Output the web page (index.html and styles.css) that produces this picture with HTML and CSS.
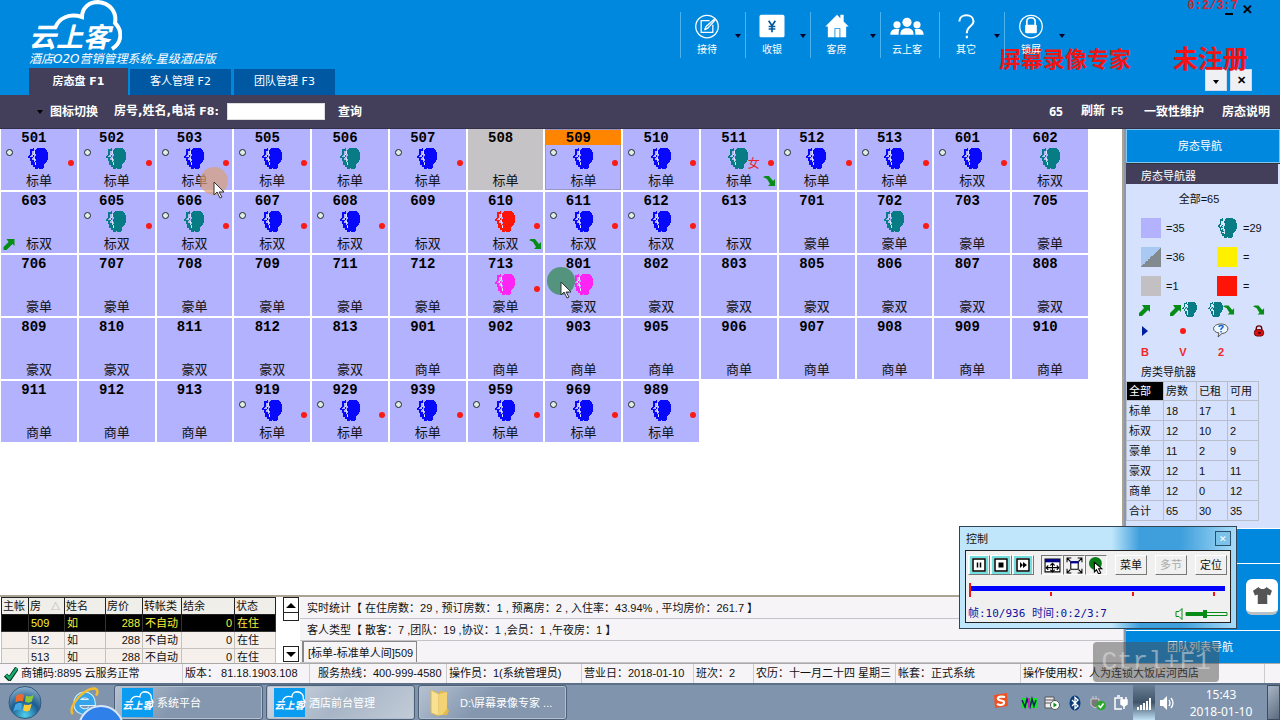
FILE: index.html
```html
<!DOCTYPE html>
<html lang="zh-CN">
<head>
<meta charset="utf-8">
<title>云上客 酒店管理系统</title>
<link rel="stylesheet" href="styles.css">
</head>
<body>
<svg class="defs" aria-hidden="true">
  <symbol id="head" viewBox="0 0 20 21">
    <g shape-rendering="crispEdges">
      <path fill="currentColor" d="M8 1l2-1h6l3 2 1 3v6l-1 3-2 1-1 2v2l-1 2h-4v-2l-1 2H7v-3l1-2-1-2 1-2-1-1V9l1-2-1-3z"/>
      <path fill="none" stroke="currentColor" stroke-width="1.500" d="M6 1L3 2v4L1 9l2 1v2l1 1v3h2v3"/>
      <path fill="currentColor" d="M4 7h2v3H4zM5 12h2v3H5zM4 2h2v1H4z"/>
      <path fill="none" stroke="#e8f4ff" stroke-width=".8" d="M6 3v3L4 8l2 2v2l1 2v3"/>
    </g>
  </symbol>
  <symbol id="up" viewBox="0 0 12 12"><path fill="#078c18" d="M3 1h8v7L9 6l-6 6H0V9l5-5z"/></symbol>
  <symbol id="down" viewBox="0 0 13 12"><path fill="#078c18" d="M0 2l2-1h4l4 5 2-2v7H5l2-2-3-5z"/></symbol>
  <symbol id="cursor" viewBox="0 0 12 18"><path fill="#fff" stroke="#333" d="M1 1v13l3-3 3 6 2-1-3-5h5z"/></symbol>
  <symbol id="logo" viewBox="0 0 90 52"><path fill="none" stroke="#fff" stroke-width="4" d="M25 28C29 18 39 13 52 17 52 7 60 2 68 2 80 3 87 12 85 23c8 8 7 20-3 26"/></symbol>
</svg>

<header class="header">
  <div class="header-top">
    <div class="brand">
      <svg class="brand-cloud"><use href="#logo"/></svg>
      <strong class="brand-name">云上客</strong>
      <span class="brand-sub">酒店O2O营销管理系统-星级酒店版</span>
    </div>
    <nav class="menu">
      <button class="menu-item has-more"><svg viewBox="0 0 30 30" fill="none" stroke="#fff" stroke-width="1.500"><circle cx="15" cy="15" r="13.500"/><path d="M18 8H8v14h14V13M12 19l2-4L24 6M12 19l4-2 9-10"/></svg><span>接待</span></button>
      <button class="menu-item has-more"><svg viewBox="0 0 30 30"><rect x="0" y="1" width="30" height="27" rx="2" fill="#fff"/><path fill="none" stroke="#00599e" stroke-width="2" d="M11 8l4 6 4-6M15 14v8M11 15h8M11 18h8"/></svg><span>收银</span></button>
      <button class="menu-item has-more wide"><svg viewBox="0 0 30 30" fill="#fff"><path d="M1 15L15 1l4 4V1h4v8l6 6h-3v13h-7V17h-7v11H4V15z"/><path d="M13 18h5v10h-5z"/></svg><span>客房</span></button>
      <button class="menu-item narrow"><svg class="people" viewBox="0 0 40 30" fill="#fff"><circle cx="20" cy="10" r="5.500"/><circle cx="8" cy="13" r="4.300"/><circle cx="32" cy="13" r="4.300"/><path d="M12 25c0-6 3-8 8-8s8 2 8 8zM0 25c0-5 3-7 7-7h4c-1 2-1 4-1 7zM30 25c0-3 0-5-1-7h4c4 0 7 2 7 7z"/></svg><span>云上客</span></button>
      <button class="menu-item has-more"><svg viewBox="0 0 30 30" fill="none" stroke="#fff" stroke-width="2.500"><path d="M7 9c0-10 17-10 17 0 0 6-8 5-8 14M16 26v3"/></svg><span>其它</span></button>
      <button class="menu-item has-more"><svg viewBox="0 0 30 30"><circle cx="15" cy="15" r="13.500" fill="none" stroke="#fff" stroke-width="1.500"/><path d="M10 14V9c0-6 10-6 10 0v5" fill="none" stroke="#fff" stroke-width="2"/><rect x="8" y="13" width="14" height="10" rx="1" fill="#fff"/></svg><span>锁屏</span></button>
    </nav>
    <div class="window-controls"><button aria-label="最小化"><i class="dash"></i></button><button aria-label="关闭">✕</button></div>
  </div>
  <div class="header-tabs">
    <button class="tab active">房态盘 F1</button>
    <button class="tab">客人管理 F2</button>
    <button class="tab">团队管理 F3</button>
    <div class="pane-controls"><button aria-label="列表"><i class="caret"></i></button><button aria-label="关闭页签">✕</button></div>
  </div>
  <div class="watermark"><span>屏幕录像专家</span><span>未注册</span></div>
  <div class="rec-time">0:2/3:7</div>
</header>

<div class="toolbar">
  <button class="switch"><i class="caret"></i>图标切换</button>
  <label for="q">房号,姓名,电话 <small>F8:</small></label>
  <input id="q" type="text">
  <button>查询</button>
  <span class="count">65</span>
  <button class="refresh">刷新 <small>F5</small></button>
  <button class="maintain">一致性维护</button>
  <button>房态说明</button>
</div>

<main class="main">
  <section class="work">
    <div class="board-wrap">
      <div class="board" id="board"></div>
      <div class="pointer orange"><svg><use href="#cursor"/></svg></div>
      <div class="pointer green"><svg><use href="#cursor"/></svg></div>
    </div>
    <div class="bottom">
      <div class="guest-list">
        <table class="guests">
          <colgroup><col class="c1"><col class="c2"><col class="c3"><col class="c4"><col class="c5"><col class="c6"><col class="c7"></colgroup>
          <thead><tr><th>主帐</th><th>房 <span class="sort">△</span></th><th>姓名</th><th>房价</th><th>转帐类</th><th>结余</th><th>状态</th></tr></thead>
          <tbody>
            <tr class="selected"><td></td><td>509</td><td>如</td><td class="num">288</td><td>不自动</td><td class="num">0</td><td>在住</td></tr>
            <tr><td></td><td>512</td><td>如</td><td class="num">288</td><td>不自动</td><td class="num">0</td><td>在住</td></tr>
            <tr><td></td><td>513</td><td>如</td><td class="num">288</td><td>不自动</td><td class="num">0</td><td>在住</td></tr>
          </tbody>
        </table>
      </div>
      <div class="scroll"><button aria-label="向上"><i class="caret up"></i></button><span class="thumb"></span><button class="last" aria-label="向下"><i class="caret"></i></button></div>
      <div class="stats">
        <p>实时统计【 在住房数：29 , 预订房数：1 , 预离房：2 , 入住率：43.94% , 平均房价：261.7 】</p>
        <p>客人类型【 散客：7 ,团队：19 ,协议：1 ,会员：1 ,午夜房：1 】</p>
        <p class="room-line"><span>[标单-标准单人间]509</span></p>
      </div>
    </div>
  </section>

  <aside class="side">
    <button class="side-title">房态导航</button>
    <div class="side-panel">
      <h2>房态导航器</h2>
      <p class="all">全部=65</p>
      <div class="legend">
        <i class="sw free"></i><span>=35</span><svg class="teal"><use href="#head"/></svg><span>=29</span>
        <i class="sw half"></i><span>=36</span><i class="sw yellow"></i><span>=</span>
        <i class="sw gray"></i><span>=1</span><i class="sw red"></i><span>=</span>
      </div>
      <div class="marks">
        <span><svg class="m"><use href="#up"/></svg></span>
        <span><svg class="m"><use href="#up"/></svg><svg class="h"><use href="#head"/></svg></span>
        <span><svg class="h"><use href="#head"/></svg><svg class="m"><use href="#down"/></svg></span>
        <span><svg class="m"><use href="#down"/></svg></span>
        <span><svg class="m" viewBox="0 0 12 12"><path fill="#001f9e" d="M3 1l6 5-6 5z"/></svg></span>
        <span><i class="dot"></i></span>
        <span><svg class="bubble" viewBox="0 0 16 15"><path fill="#eef6ff" stroke="#555" d="M8 1c9 0 9 9 1 9.500L5 14l1-4C-2 9-1 1 8 1z"/><path fill="none" stroke="#1769d2" stroke-width="1.500" d="M6 4c0-2 5-2 4 0l-2 2v1M8 8v1.500"/></svg></span>
        <span><svg class="m" viewBox="0 0 12 13"><path fill="none" stroke="#600" stroke-width="1.500" d="M3 6V4c0-4 6-4 6 0v2"/><rect x="1" y="5" width="10" height="7" rx="3" fill="#d11" stroke="#600"/><path stroke="#400" stroke-width="2" d="M5 8.500h3"/></svg></span>
        <b>B</b><b>V</b><b>2</b>
      </div>
      <h3>房类导航器</h3>
      <table class="types">
        <colgroup><col class="t1"><col class="t2"><col class="t3"><col class="t4"></colgroup>
        <tr><th class="on">全部</th><th>房数</th><th>已租</th><th>可用</th></tr>
        <tr><td>标单</td><td>18</td><td>17</td><td>1</td></tr>
        <tr><td>标双</td><td>12</td><td>10</td><td>2</td></tr>
        <tr><td>豪单</td><td>11</td><td>2</td><td>9</td></tr>
        <tr><td>豪双</td><td>12</td><td>1</td><td>11</td></tr>
        <tr><td>商单</td><td>12</td><td>0</td><td>12</td></tr>
        <tr><td>合计</td><td>65</td><td>30</td><td>35</td></tr>
      </table>
    </div>
    <div class="side-strip"></div>
    <div class="side-skin"><button aria-label="皮肤"><svg viewBox="0 0 22 20"><path fill="#555" d="M7 1c1 3 7 3 8 0l6 4-2 5-3-1v10H6V9l-3 1-2-5z"/></svg></button></div>
    <button class="side-team">团队列表导航</button>
  </aside>

  <section class="recorder">
    <div class="rec-title"><span>控制</span><button aria-label="关闭">✕</button></div>
    <div class="rec-body">
      <div class="rec-tools">
        <button class="key" aria-label="暂停"><svg viewBox="0 0 14 14"><rect x="1" y="1" width="12" height="12" fill="#fff" stroke="#000" stroke-width="1.500"/><path stroke="#000" stroke-width="1.500" d="M5.500 4.500v5M8.500 4.500v5"/></svg></button>
        <button class="key" aria-label="停止"><svg viewBox="0 0 14 14"><rect x="1" y="1" width="12" height="12" fill="#fff" stroke="#000" stroke-width="1.500"/><path d="M4.500 4.500h5v5h-5z"/></svg></button>
        <button class="key" aria-label="快进"><svg viewBox="0 0 14 14"><rect x="1" y="1" width="12" height="12" fill="#fff" stroke="#000" stroke-width="1.500"/><path d="M4 4l3 3-3 3zM7 4l4 3-4 3z"/></svg></button>
        <button class="tog first" aria-label="移动"><svg viewBox="0 0 16 16"><path fill="#fff" stroke="#000" d="M1 2h14v12H1z"/><path fill="#008" d="M1 2h14v3H1z"/><path fill="none" stroke="#000" d="M2 10h12M8 6v7M4 8l-2 2 2 2M12 8l2 2-2 2M6 8l2-2 2 2M6 12l2 2 2-2"/></svg></button>
        <button class="tog" aria-label="全屏"><svg viewBox="0 0 16 16"><path fill="#fff" stroke="#000" d="M4.500 4.500h7v7h-7z"/><path stroke="#009" stroke-width="2" d="M4 5h8"/><path fill="none" stroke="#000" d="M1 5V1h4M11 1h4v4M15 11v4h-4M5 15H1v-4M1 1l3 3M15 1l-3 3M1 15l3-3M15 15l-3-3"/></svg></button>
        <button class="tog" aria-label="光标"><svg viewBox="0 0 16 16"><circle cx="7" cy="6" r="6" fill="#087a16"/><path fill="#fff" stroke="#000" d="M6 5v9l2-2 2 4 2-1-2-4h3z"/></svg></button>
        <button class="txt">菜单</button><button class="txt" disabled>多节</button><button class="txt">定位</button>
      </div>
      <div class="rec-track"><i></i><i></i><i></i><i></i></div>
      <div class="rec-info"><span>帧:10/936 时间:0:2/3:7</span><svg viewBox="0 0 54 14"><path fill="none" stroke="#078c18" d="M2 4.500h3l3-3v11l-3-3H2zM12 5.500h41v3H12z"/><path fill="#078c18" d="M12 5h20v4H12zM29 3h4v8h-4z"/></svg></div>
    </div>
  </section>
</main>

<footer class="status">
  <span class="ok"><svg viewBox="0 0 14 14"><path fill="none" stroke="#003c20" stroke-width="4.500" d="M1.500 8l4 4L13 1"/><path fill="none" stroke="#1bab70" stroke-width="2.500" d="M2 8l3.500 3.500L13 1"/></svg>商铺码:8895 云服务正常</span>
  <span>版本： 81.18.1903.108</span>
  <span class="hot">服务热线：400-999-4580</span>
  <span>操作员：1(系统管理员)</span>
  <span>营业日：2018-01-10</span>
  <span>班次：2</span>
  <span>农历：十一月二十四 星期三</span>
  <span>帐套：正式系统</span>
  <span>操作使用权：人为连锁大饭店河西店</span>
  <span></span>
  <div class="keycast">Ctrl+F1</div>
</footer>

<div class="taskbar">
  <button class="start" aria-label="开始"><svg viewBox="0 0 36 36"><defs><radialGradient id="orb" cx=".5" cy=".9" r=".9"><stop offset="0" stop-color="#4fd0ee"/><stop offset=".5" stop-color="#1c5c90"/><stop offset="1" stop-color="#8cb0cc"/></radialGradient></defs><circle cx="18" cy="18" r="16.500" fill="url(#orb)" stroke="#35577a"/><path fill="#ed6a2c" d="M9 11c3-2 5-2 8-1l-1 7c-3-1-5-1-8 1z"/><path fill="#8cc63a" d="M19 11c3 1 5 1 8-1l-2 7c-3 2-5 1-7 0z"/><path fill="#43a6e0" d="M8 20c3-2 5-2 7-1l-1 7c-3-1-5-1-8 1z"/><path fill="#fccb38" d="M17 20c3 1 5 1 8-1l-2 7c-3 2-5 1-7 0z"/></svg></button>
  <div class="ie"><svg viewBox="0 0 32 32"><path fill="none" stroke="#d8f2ff" stroke-width="7" d="M8 16h16C23 5 8 6 8 17c0 9 11 11 15 5"/><path fill="none" stroke="#36a4ea" stroke-width="5" d="M8 16h16C23 5 8 6 8 17c0 9 11 11 15 5"/><path fill="none" stroke="#f2bc2b" stroke-width="2.500" d="M4 28C-1 22 10 8 20 3c9-4 11 1 8 6"/></svg></div>
  <i class="bubble-ball"></i>
  <button class="task"><span class="task-logo"><svg><use href="#logo"/></svg><b>云上客</b></span>系统平台</button>
  <button class="task lit"><span class="task-logo"><svg><use href="#logo"/></svg><b>云上客</b></span>酒店前台管理</button>
  <button class="task"><svg class="folder" viewBox="0 0 30 30"><path fill="#e2b94e" d="M14 3l7 1v16l2 3-2 4h-7z"/><path fill="#f8e190" stroke="#d8b558" d="M5 2l8 4v22l-8-3z"/><path fill="#f3d373" d="M13 6l8-2v17l-5 6h-3z"/></svg>D:\屏幕录像专家 ...</button>
  <div class="tray">
    <svg class="ime" viewBox="0 0 16 16"><path fill="#ef5323" d="M1 2l13-2 1 13-13 2z"/><path fill="none" stroke="#fff" stroke-width="2.200" d="M12 4C8 3 4 4 5 6s7 1 6 4-5 2-7 1"/></svg>
    <svg viewBox="0 0 16 16"><path fill="#19e02b" d="M0 3h16v10H0z"/><path fill="none" stroke="#125" stroke-width="1.500" d="M1 5l3 7 2-8 3 8 2-8 2 7 2-6"/><path stroke="#c2c" stroke-width="2" d="M8 3v10"/></svg>
    <svg viewBox="0 0 16 16"><path fill="#eee" stroke="#555" d="M1 2h9v11H1zM1 5h9M1 8h9"/><circle cx="11" cy="10" r="4.500" fill="#fff" stroke="#555"/><path fill="#078c18" d="M9.500 7.500L13 10l-3.500 2.500z"/></svg>
    <svg viewBox="0 0 16 16"><ellipse cx="8" cy="8" rx="5.500" ry="7.500" fill="#083d7c"/><path fill="none" stroke="#fff" stroke-width="1.300" d="M5 5l6 6-3 2.500v-11L11 5l-6 6"/></svg>
    <svg viewBox="0 0 16 16"><path fill="#777" stroke="#ccc" d="M1 4h8v6l-4 3-4-3zM3 1v3M6 1v3"/><circle cx="11" cy="10.500" r="4.800" fill="#2aa82e"/><path fill="none" stroke="#fff" stroke-width="1.600" d="M8.500 10.500l2 2 3-4"/></svg>
    <svg viewBox="0 0 16 16" fill="none" stroke="#fff" stroke-width="1.500"><path d="M9 3H2v11h7M4 1h3"/><path fill="#fff" d="M8 5h6v4l-3 2-3-2z"/><path d="M9 2v3M13 2v3M11 10v4"/></svg>
    <span class="net"><svg viewBox="0 0 16 16" fill="#fff"><path d="M1 11h2v3H1zM4 9h2v5H4zM7 7h2v7H7zM10 5h2v9h-2zM13 2h2v12h-2z"/></svg></span>
    <svg viewBox="0 0 16 16"><path fill="#fff" d="M1 5h3l4-4v14l-4-4H1z"/><path fill="none" stroke="#fff" stroke-width="1.300" d="M10 5q2 3 0 6M12 3q4 5 0 10"/></svg>
  </div>
  <div class="clock">15:43<br>2018-01-10</div>
  <button class="peek" aria-label="显示桌面"></button>
</div>
<script src="rooms.js"></script>
</body>
</html>
```
FILE: styles.css
```css
* { box-sizing: border-box; }
body {
  margin: 0;
  min-height: 100vh;
  display: flex;
  flex-direction: column;
  font: 11px/16px "Liberation Sans", "Noto Sans CJK SC", sans-serif;
  color: #111;
  background: #fff;
}
button { font: inherit; color: inherit; background: none; border: 0; padding: 0; }
p, h2, h3 { margin: 0; font: inherit; }
svg { display: block; }
.defs { position: absolute; width: 0; height: 0; }
.caret { display: inline-block; border: 3px solid transparent; border-top: 4px solid #000; border-bottom: 0; }
.caret.up { border-top: 0; border-bottom: 4px solid #000; }

/* header */
.header { position: relative; background: #0087de; color: #fff; }
.header-top { display: flex; height: 68px; }
.brand { position: relative; padding: 24px 0 0 29px; width: 260px; }
.brand-cloud { position: absolute; left: 28px; top: 0; width: 94px; height: 52px; }
.brand-name { display: block; font-size: 27px; line-height: 28px; font-style: italic; font-weight: 700; }
.brand-sub { display: block; font-size: 12px; line-height: 15px; font-style: italic; font-family: "DejaVu Sans", "Noto Sans CJK SC", sans-serif; white-space: nowrap; }
.menu { position: relative; z-index: 1; display: flex; margin-left: auto; padding-top: 12px; }
.menu-item {
  position: relative;
  width: 65px;
  height: 46px;
  padding: 2px 12px 0 0;
  border-left: 1px solid #4bb4f0;
  display: flex;
  flex-direction: column;
  align-items: center;
  gap: 3px;
  font-size: 10px;
}
.menu-item.wide { width: 70px; padding-right: 18px; }
.menu-item.narrow { width: 59px; padding-right: 6px; }
.menu-item svg { width: 30px; height: 30px; }
.menu-item .people { width: 40px; }
.menu-item.has-more::after { content: ""; position: absolute; right: 4px; top: 22px; border: 3px solid transparent; border-top: 4px solid #002; border-bottom: 0; }
.window-controls { width: 211px; padding: 2px 27px 0 0; display: flex; justify-content: flex-end; align-items: flex-start; gap: 9px; color: #000; font-size: 13px; font-weight: 700; }
.dash { display: block; width: 8px; height: 2px; margin-top: 11px; background: #000; }
.header-tabs { display: flex; align-items: flex-end; padding-left: 29px; height: 27px; gap: 3px; }
.tab { width: 101px; height: 26px; background: #0058a2; font-family: "DejaVu Sans", "Noto Sans CJK SC", sans-serif; }
.tab.active { width: 99px; height: 27px; margin-right: -1px; background: #433f5a; font-size: 11px; font-weight: 700; }
.pane-controls { margin: 0 28px 4px auto; display: flex; gap: 3px; color: #000; }
.pane-controls button { width: 22px; height: 22px; background: #eef0f4; border: 1px solid #cfdbe8; font-weight: 700; }
.watermark { position: absolute; right: 32px; top: 46px; display: flex; gap: 42px; color: #f01414; font: 700 22px/28px "Liberation Serif", "Noto Sans CJK SC", serif; white-space: nowrap; }
.watermark span + span { font-size: 25px; }
.rec-time { position: absolute; right: 42px; top: 0; color: #d92430; font: 700 12px/13px "Liberation Mono", monospace; }

/* toolbar */
.toolbar {
  display: flex;
  align-items: center;
  height: 34px;
  padding: 0 10px 0 37px;
  background: #433f5a;
  color: #fff;
  font-size: 12px;
  font-weight: 700;
  border-bottom: 1px solid #34304a;
  white-space: nowrap;
}
.toolbar label { margin: 0 8px 0 16px; font-family: "DejaVu Sans", "Noto Sans CJK SC", sans-serif; font-size: 12px; }
.toolbar label small { font-size: 11px; }
.toolbar input { width: 98px; height: 17px; margin-right: 13px; padding: 0 2px; border: 1px solid #ddd; outline: 0; color: #111; background: #fff; font: inherit; }
.switch { display: flex; align-items: center; gap: 7px; }
.count { margin-left: auto; font-family: "Noto Sans", sans-serif; }
.refresh { margin-left: 18px; }
.refresh small { font-size: 10px; margin-left: 3px; }
.maintain { margin: 0 18px 0 21px; }

/* board */
.main { position: relative; flex: 1; display: grid; grid-template-columns: minmax(0, 1fr) 156px; }
.work { display: flex; flex-direction: column; min-width: 0; }
.board-wrap { position: relative; flex: 1; border-right: 2px solid #aaa394; }
.board { display: grid; grid-template-columns: repeat(14, minmax(0, 1fr)); gap: 2px; padding: 0 34px 0 1px; }
.room { position: relative; height: 61px; background: #b2b2ff; text-align: center; padding: 1px 0 0; display: flex; flex-direction: column; align-items: center; }
.room.dirty { background: #c6c3c6; }
.room.picked { box-shadow: inset 0 0 0 1px #9a98c0; }
.room-no { width: 100%; padding-right: 10px; font: 700 14px/16px "Liberation Mono", monospace; color: #000; }
.picked .room-no { height: 15px; margin-bottom: 1px; background: #ff8500; }
.room-head { height: 27px; padding: 2px 1px 0 0; }
.room-head svg { width: 20px; height: 21px; }
.room-type { font-size: 13px; line-height: 16px; }
.blue { color: #0808fa; }
.teal { color: #087c84; }
.crimson { color: #ff1408; }
.pink { color: #ff24f4; }
.room .ring { position: absolute; left: 5px; top: 20px; width: 7px; height: 7px; border: 1px solid #222; border-radius: 50%; background: #dceee6; }
.dot { display: block; width: 6px; height: 6px; border-radius: 3px; background: #fa1c14; }
.room .dot { position: absolute; right: 3px; top: 31px; }
.room .woman { position: absolute; right: 17px; top: 27px; color: #e8202c; font-size: 12px; }
.room .arr { position: absolute; bottom: 3px; width: 13px; height: 12px; }
.arr.out { right: 1px; }
.arr.in { left: 2px; }
.pointer { position: absolute; width: 28px; height: 28px; border-radius: 50%; }
.pointer svg { position: absolute; left: 13px; top: 14px; width: 12px; height: 18px; }
.pointer.orange { left: 200px; top: 38px; background: rgba(220, 160, 120, .7); }
.pointer.green { left: 547px; top: 138px; background: #54947e; }

/* bottom lists */
.bottom { display: flex; height: 68px; border-top: 2px solid #aaa394; background: #f6f4f7; border-right: 1px solid #ccc; }
.guest-list { width: 276px; height: 66px; overflow: hidden; padding-left: 1px; background: #fff; }
.guests { width: 274px; table-layout: fixed; border-collapse: collapse; line-height: 16px; white-space: nowrap; }
.guests th { height: 17px; padding: 0 1px; text-align: left; font-weight: 400; border: 1px solid #222; background: #f0eee9; }
.guests td { height: 17px; padding: 0 2px; border: 1px solid #c5c1bc; background: #f5f0eb; }
.guests .num { text-align: right; }
.guests .selected td { background: #000; color: #f5f03a; border-color: #333; }
.sort { color: #999; font-size: 9px; line-height: 9px; margin-left: 7px; }
.c1 { width: 27px; } .c2 { width: 36px; } .c3 { width: 41px; } .c4 { width: 37px; } .c5 { width: 39px; } .c6 { width: 53px; } .c7 { width: 41px; }
.scroll { width: 24px; padding: 0 1px 0 7px; display: flex; flex-direction: column; background: #fff; }
.scroll button { height: 16px; border: 1px solid #222; background: #fff; display: grid; place-items: center; }
.scroll .caret { border-left-width: 5px; border-right-width: 5px; border-top-width: 5px; }
.scroll .caret.up { border-top-width: 0; border-bottom-width: 5px; }
.scroll .thumb { height: 8px; border: 1px solid #222; border-top: 0; }
.scroll .last { margin-top: auto; margin-bottom: 1px; }
.stats { flex: 1; white-space: nowrap; overflow: hidden; }
.stats p { height: 22px; line-height: 22px; padding-left: 7px; border-bottom: 1px solid #c6c3c8; }
.stats .room-line { padding-left: 2px; }
.room-line span { display: inline-block; height: 21px; width: 115px; padding-left: 4px; border: 1px solid #888; border-width: 1px 1px 0 2px; }

/* sidebar */
.side { display: flex; flex-direction: column; border-left: 2px solid #8c98aa; background: #fff; }
.side-title { height: 34px; padding-right: 6px; background: #0087de; color: #fff; border: 1px solid #80c6f4; }
.side-panel { flex: 1; background: #d5e1fd; border-top: 1px solid #333; padding-bottom: 4px; }
.side-panel h2 { height: 20px; line-height: 24px; padding-left: 15px; margin-right: 2px; background: #433f5a; color: #fff; }
.all { text-align: center; margin: 7px 8px 11px 0; }
.legend { display: grid; grid-template-columns: 25px 51px 26px 1fr; row-gap: 9px; align-items: center; padding-left: 15px; }
.sw { width: 20px; height: 20px; }
.legend svg { width: 20px; height: 20px; }
.free { background: #b2b2ff; }
.half { background: linear-gradient(135deg, #a9c9f2 50%, #82898f 50%); }
.gray { background: #c2c0c2; }
.yellow { background: #fff000; }
.red { background: #ff1408; }
.marks { display: grid; grid-template-columns: repeat(4, 38px); grid-auto-rows: 21px; margin-top: 3px; color: #087c84; }
.marks > * { display: flex; align-items: center; justify-content: center; }
.marks .m { width: 12px; height: 12px; }
.marks .h { width: 15px; height: 15px; }
.marks .bubble { width: 16px; height: 15px; }
.marks b { color: #f02828; }
.side-panel h3 { padding: 2px 0 0 15px; line-height: 17px; }
.types { width: 132px; table-layout: fixed; border-collapse: collapse; }
.types th, .types td { height: 20px; padding: 0 2px; border: 1px solid #b9bfca; font-weight: 400; text-align: left; line-height: 18px; }
.types th { height: 19px; }
.types .on { background: #000; color: #fff; }
.t1 { width: 37px; } .t2 { width: 33px; } .t3 { width: 31px; } .t4 { width: 31px; }
.side-strip { height: 34px; margin-top: 1px; background: #0087de; }
.side-skin { height: 66px; margin-top: 1px; padding-right: 2px; background: #0087de; display: flex; justify-content: flex-end; align-items: center; }
.side-skin button { width: 32px; height: 36px; border-radius: 6px; background: #fff; border-bottom: 3px solid #b9c0c6; display: grid; place-items: center; }
.side-skin svg { width: 21px; height: 19px; }
.side-team { height: 32px; margin-top: 1px; padding-right: 6px; background: #0087de; color: #fff; }

/* floating recorder window */
.recorder { position: absolute; right: 43px; bottom: 34px; width: 278px; padding: 0 5px 5px; border: 1px solid #345; background: linear-gradient(90deg, #bfe6fb 0 55%, #3f9fdc 65%, #3f9fdc 80%, #a8dcf8); }
.rec-title { display: flex; justify-content: space-between; align-items: center; height: 23px; padding-left: 1px; }
.rec-title button { width: 16px; height: 15px; border: 1px solid #26506e; background: #7cc3ea; color: #fff; font-size: 9px; line-height: 10px; }
.rec-body { height: 73px; border: 1px solid #222; background: #f0f0f0; padding: 3px 2px; }
.rec-tools { display: flex; align-items: center; height: 22px; }
.rec-tools button { height: 20px; border: 1px solid; border-color: #fff #777 #777 #fff; display: grid; place-items: center; }
.key { width: 22px; }
.key svg { width: 14px; height: 14px; outline: 2px solid #72dfdf; }
.tog { width: 22px; }
.rec-tools .tog { border-color: #777 #fff #fff #777; }
.tog svg { width: 17px; height: 17px; }
.tog.first { margin-left: 7px; }
.rec-tools .txt { width: 32px; margin-left: 8px; }
.txt:disabled { color: #aaa; }
.rec-track { display: flex; justify-content: space-between; height: 10px; margin: 10px 3px 0 1px; border-top: 5px solid #00f; padding-right: 10px; }
.rec-track i { width: 2px; height: 4px; margin-top: 1px; background: #f01818; }
.rec-track i:first-child { height: 14px; margin-top: -8px; }
.rec-info { display: flex; justify-content: space-between; align-items: center; margin-top: 10px; color: #1010a0; }
.rec-info span { font: 11px/16px "DejaVu Sans Mono", "Noto Sans CJK SC", monospace; }
.rec-info svg { width: 54px; height: 14px; }

/* status line */
.status { position: relative; display: grid; grid-template-columns: 182fr 127fr 137fr 135fr 112fr 60fr 142fr 125fr 244fr 16fr; height: 20px; background: #f6f4f7; border-top: 1px solid #aaa; white-space: nowrap; }
.status > span { padding-left: 2px; line-height: 19px; border-left: 1px solid #ccc; }
.status .ok { display: flex; align-items: center; gap: 3px; border: 0; padding-left: 4px; }
.status .hot { padding-left: 8px; }
.ok svg { width: 14px; height: 14px; }
.keycast { position: absolute; right: 61px; top: -22px; width: 126px; height: 40px; border-radius: 4px; background: rgba(80, 80, 80, .5); color: rgba(230, 230, 230, .5); text-align: center; font: 26px/40px "Liberation Mono", monospace; }

/* taskbar */
.taskbar { position: relative; display: flex; align-items: center; height: 37px; background: #8095ad; border-top: 2px solid #5c7189; color: #fff; overflow: hidden; }
.start { margin-left: 7px; }
.start svg { width: 36px; height: 35px; }
.ie { margin: 0 14px 0 26px; }
.ie svg { width: 31px; height: 31px; }
.bubble-ball { position: absolute; left: 78px; top: 20px; width: 46px; height: 46px; border-radius: 50%; border: 2px solid #d6e6fa; background: #2f80e8; }
.task { display: flex; align-items: center; gap: 4px; width: 149px; height: 35px; margin-right: 3px; padding-left: 7px; border: 1px solid #4c5f76; border-radius: 3px; background: linear-gradient(135deg, #b6c2d1, #8497ae 45%); box-shadow: inset 0 0 0 1px #b2c0d0; }
.task.lit { background: linear-gradient(135deg, #d3dae4, #a7b5c6 50%, #c3ccd8); }
.task-logo { position: relative; width: 31px; height: 29px; background: #0a9cf0; text-align: center; }
.task-logo svg { position: absolute; left: 0; top: 3px; width: 31px; height: 18px; }
.task-logo b { display: block; padding-top: 10px; font-size: 10px; font-style: italic; }
.folder { width: 30px; height: 30px; }
.tray { display: flex; align-items: center; gap: 7px; margin-left: auto; }
.tray svg { width: 16px; height: 16px; }
.tray .ime { margin: 0 5px 4px 0; }
.net { margin: 0 -3px; padding: 11px 3px 8px; background: linear-gradient(#697d94, #405468 50%, #bfe0f4); }
.clock { width: 92px; text-align: center; font: 12px/17px "Noto Sans", sans-serif; }
.peek { width: 13px; height: 35px; border: 1px solid #3d4c60; background: linear-gradient(135deg, #a8b5c6, #5c6c80); }
```
FILE: rooms.js
```js
// number, type, then flags: b/t/r/p = head colour, o = ring, d = red dot,
// w = female guest, x = leaving, i = arriving, g = dirty, s = selected
const rooms = `
501 标单 bod|502 标单 tod|503 标单 bod|505 标单 bod|506 标单 t|507 标单 bod|508 标单 g|509 标单 bods|510 标单 bod|511 标单 tdwx|512 标单 bod|513 标单 bod|601 标双 bod|602 标双 t
603 标双 i|605 标双 tod|606 标双 tod|607 标双 bod|608 标双 bod|609 标双|610 标双 rdx|611 标双 bod|612 标双 bod|613 标双|701 豪单|702 豪单 td|703 豪单|705 豪单
706 豪单|707 豪单|708 豪单|709 豪单|711 豪单|712 豪单|713 豪单 pd|801 豪双 p|802 豪双|803 豪双|805 豪双|806 豪双|807 豪双|808 豪双
809 豪双|810 豪双|811 豪双|812 豪双|813 豪双|901 商单|902 商单|903 商单|905 商单|906 商单|907 商单|908 商单|909 商单|910 商单
911 商单|912 商单|913 商单|919 标单 bod|929 标单 bod|939 标单 bod|959 标单 bod|969 标单 bod|989 标单 bod`;
const colours = { b: "blue", t: "teal", r: "crimson", p: "pink" };
document.getElementById("board").innerHTML = rooms.trim().split(/[|\n]/).map((entry) => {
  const [no, type, flags = ""] = entry.split(" ");
  const has = (f) => flags.includes(f);
  const head = Object.keys(colours).find(has);
  return `<button class="room${has("g") ? " dirty" : ""}${has("s") ? " picked" : ""}">
    <span class="room-no">${no}</span>
    <span class="room-head">${head ? `<svg class="${colours[head]}"><use href="#head"/></svg>` : ""}</span>
    <span class="room-type">${type}</span>
    ${has("o") ? '<i class="ring"></i>' : ""}${has("d") ? '<i class="dot"></i>' : ""}
    ${has("w") ? '<span class="woman">女</span>' : ""}
    ${has("x") ? '<svg class="arr out"><use href="#down"/></svg>' : ""}${has("i") ? '<svg class="arr in"><use href="#up"/></svg>' : ""}
  </button>`;
}).join("");
document.getElementById("q").focus();
```
